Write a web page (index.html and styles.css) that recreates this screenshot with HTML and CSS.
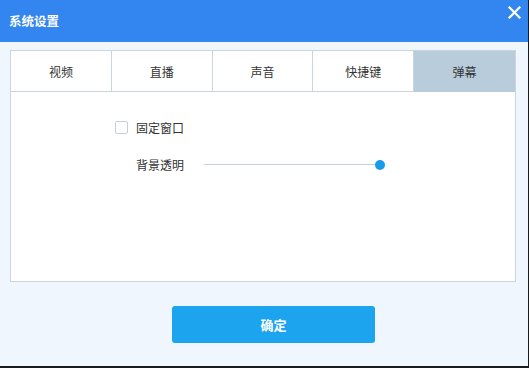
FILE: index.html
```html
<!DOCTYPE html>
<html lang="zh">
<head>
<meta charset="utf-8">
<title>系统设置</title>
<link rel="stylesheet" href="styles.css">
</head>
<body>
<div class="window">
  <header class="titlebar">
    <span class="title">系统设置</span>
    <svg class="close" width="13" height="13" viewBox="0 0 13 13"><path d="M1.5 1.5 L11.5 11.5 M11.5 1.5 L1.5 11.5" stroke="#fff" stroke-width="2.2" stroke-linecap="square"/></svg>
  </header>
  <main class="body">
    <section class="panel">
      <nav class="tabs">
        <div class="tab">视频</div>
        <div class="tab">直播</div>
        <div class="tab">声音</div>
        <div class="tab">快捷键</div>
        <div class="tab active">弹幕</div>
      </nav>
      <div class="content">
        <label class="row check-row"><span class="checkbox"></span><span class="label">固定窗口</span></label>
        <div class="row slider-row">
          <span class="label">背景透明</span>
          <div class="slider"><span class="track"></span><span class="thumb"></span></div>
        </div>
      </div>
    </section>
    <div class="actions">
      <button class="ok">确定</button>
    </div>
  </main>
</div>
</body>
</html>
```

FILE: styles.css
```css
* { box-sizing: border-box; }
html, body { margin: 0; padding: 0; }
body {
  width: 529px;
  height: 368px;
  font-family: "Noto Sans CJK SC", "Noto Sans", sans-serif;
  font-size: 12px;
  color: #333;
  background: #1a1a1a;
  overflow: hidden;
}
.window {
  width: 528px;
  height: 366px;
  background: #eff6fd;
  display: flex;
  flex-direction: column;
}
.titlebar {
  height: 42px;
  background: #3385ef;
  display: flex;
  align-items: center;
  justify-content: space-between;
  padding: 0 7px 0 9px;
}
.title {
  color: #fff;
  font-size: 12.5px;
  font-weight: bold;
  margin-top: -2px;
}
.close {
  align-self: flex-start;
  margin-top: 6px;
}
.body {
  flex: 1;
  padding: 8px 12px 0 10px;
}
.panel {
  height: 232px;
  background: #fff;
  border: 1px solid #cbd5dd;
  display: flex;
  flex-direction: column;
}
.tabs {
  display: grid;
  grid-template-columns: repeat(5, 1fr);
  height: 41px;
}
.tab {
  display: flex;
  align-items: center;
  justify-content: center;
  border-right: 1px solid #cbd5dd;
  border-bottom: 1px solid #cbd5dd;
  color: #333;
}
.tab:last-child { border-right: none; }
.tab.active {
  background: #b8ccdb;
  border-bottom-color: #b8ccdb;
}
.content {
  padding: 28px 0 0 104px;
  display: flex;
  flex-direction: column;
  gap: 22px;
}
.row {
  display: flex;
  align-items: center;
  height: 15px;
}
.checkbox {
  width: 13px;
  height: 13px;
  border: 1px solid #c9cfd6;
  border-radius: 2px;
  background: #fff;
  margin-right: 8px;
}
.slider-row .label { margin-left: 21px; }
.slider {
  position: relative;
  width: 181px;
  height: 10px;
  margin-left: 20px;
  display: flex;
  align-items: center;
}
.track {
  flex: 1;
  height: 1px;
  background: #c6ced6;
  margin-right: 5px;
}
.thumb {
  position: absolute;
  right: 0;
  top: 0;
  width: 10px;
  height: 10px;
  border-radius: 50%;
  background: #1a9be9;
}
.actions {
  padding: 24px 0 0 162px;
}
.ok {
  width: 203px;
  height: 37px;
  border: none;
  border-radius: 3px;
  background: #1ca4ee;
  color: #fff;
  font-family: inherit;
  font-size: 13px;
  font-weight: bold;
  padding: 0;
}
```
